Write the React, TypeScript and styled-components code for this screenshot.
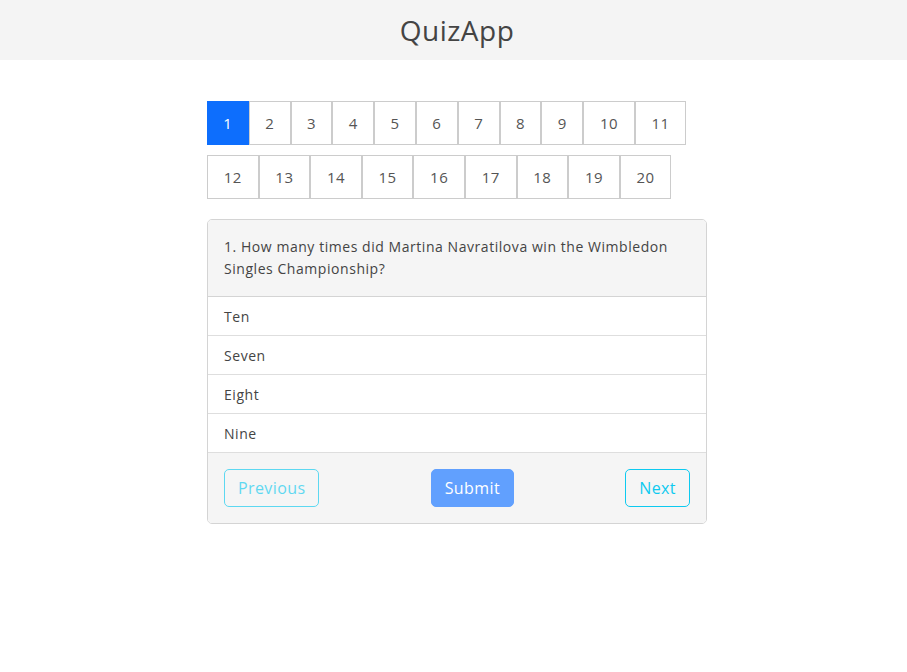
import React, { useState } from 'react'
import styled, { createGlobalStyle } from 'styled-components'

const GlobalStyle = createGlobalStyle`
    body {
        margin: 0;
        background: #fff;
        font-family: 'Open Sans', 'Liberation Sans', sans-serif;
        color: #444;
    }
`
const Header = styled.header`
    height: 60px;
    background: #f4f4f4;
    display: flex;
    align-items: center;
    justify-content: center;
    padding-left: 7px;
`
const Title = styled.h1`
    margin: 0;
    font-size: 28px;
    font-weight: 400;
    letter-spacing: 0.5px;
    color: #444;
`
const Main = styled.main`
    width: 500px;
    margin: 0 auto;
    padding: 41px 0 0 7px;
`
const PageRow = styled.div`
    display: flex;
    margin-bottom: 10px;
`
const PageButton = styled.button<{ active?: boolean }>`
    height: 44px;
    width: 41.8px;
    padding: 0;
    border: 1px solid ${(props) => props.active ? '#0d6efd' : '#ccc'};
    background: ${(props) => props.active ? '#0d6efd' : '#fff'};
    color: ${(props) => props.active ? '#fff' : '#555'};
    font-family: inherit;
    font-size: 15px;
    letter-spacing: 0.5px;
    cursor: pointer;
`
const WidePageButton = styled(PageButton)`
    width: 51.6px;
`
const Card = styled.div`
    margin-top: 20px;
    border: 1px solid #d4d4d4;
    border-radius: 5px;
    overflow: hidden;
`
const Question = styled.div`
    background: #f5f5f5;
    padding: 16px;
    font-size: 14px;
    letter-spacing: 0.55px;
    line-height: 22px;
    border-bottom: 1px solid #d4d4d4;
`
const Option = styled.div`
    height: 38px;
    display: flex;
    align-items: center;
    padding: 0 16px;
    font-size: 14px;
    letter-spacing: 0.55px;
    border-bottom: 1px solid #dedede;
    background: #fff;
    cursor: pointer;
    &:last-child {
        border-bottom-color: #d4d4d4;
    }
`
const Footer = styled.div`
    background: #f5f5f5;
    padding: 16px;
    display: flex;
    justify-content: space-between;
    align-items: center;
`
const NavButton = styled.button<{ variant: 'info' | 'primary'; disabled?: boolean }>`
    height: 38px;
    padding: 0 13px;
    border-radius: 5px;
    font-family: inherit;
    font-size: 16px;
    letter-spacing: 0.4px;
    border: 1px solid ${(props) => props.variant === 'primary' ? '#61a0fe' : '#0dcaf0'};
    background: ${(props) => props.variant === 'primary' ? '#61a0fe' : 'transparent'};
    color: ${(props) => props.variant === 'primary' ? '#fff' : '#0dcaf0'};
    opacity: ${(props) => props.variant === 'info' && props.disabled ? 0.65 : 1};
`

const options = ['Ten', 'Seven', 'Eight', 'Nine']

export default function App() {
    const [current, setCurrent] = useState(1)
    const firstRow = Array.from({ length: 11 }, (_, i) => i + 1)
    const secondRow = Array.from({ length: 9 }, (_, i) => i + 12)
    return (
        <>
            <GlobalStyle />
            <Header>
                <Title>QuizApp</Title>
            </Header>
            <Main>
                <PageRow>
                    {firstRow.map((n) => n < 10
                        ? <PageButton key={n} active={n === current} onClick={() => setCurrent(n)}>{n}</PageButton>
                        : <WidePageButton key={n} active={n === current} onClick={() => setCurrent(n)}>{n}</WidePageButton>)}
                </PageRow>
                <PageRow>
                    {secondRow.map((n) => (
                        <WidePageButton key={n} active={n === current} onClick={() => setCurrent(n)}>{n}</WidePageButton>
                    ))}
                </PageRow>
                <Card>
                    <Question>1. How many times did Martina Navratilova win the Wimbledon Singles Championship?</Question>
                    {options.map((o) => <Option key={o}>{o}</Option>)}
                    <Footer>
                        <NavButton variant="info" disabled>Previous</NavButton>
                        <NavButton variant="primary">Submit</NavButton>
                        <NavButton variant="info">Next</NavButton>
                    </Footer>
                </Card>
            </Main>
        </>
    )
}
